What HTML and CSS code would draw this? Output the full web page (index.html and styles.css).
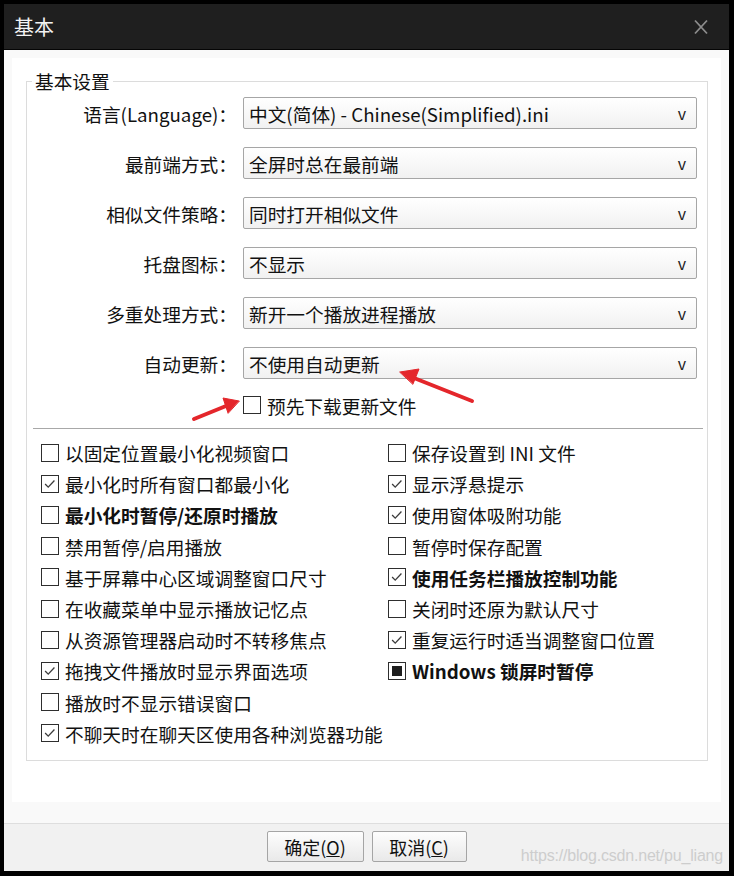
FILE: index.html
```html
<!DOCTYPE html>
<html lang="zh-cn">

<head>
    <meta charset="UTF-8">
    <meta name="viewport" content="width=device-width, initial-scale=1.0">
    <title>基本</title>
    <link rel="stylesheet" href="styles.css">
</head>

<body>
    <div class="window">
        <!-- 标题栏 -->
        <div class="titlebar">
            <span class="title">基本</span>
            <svg class="close" width="16" height="16" viewBox="0 0 16 16">
                <path d="M2 1.5 L14 14.5 M14 1.5 L2 14.5" stroke="#8c8c8c" stroke-width="1.8" fill="none" />
            </svg>
        </div>

        <div class="body">
            <div class="panel">
                <fieldset class="group">
                    <legend>基本设置</legend>

                    <div class="form">
                        <div class="form-row">
                            <label>语言(Language)：</label>
                            <div class="select"><span>中文(简体) - Chinese(Simplified).ini</span><span class="arrow">v</span></div>
                        </div>
                        <div class="form-row">
                            <label>最前端方式：</label>
                            <div class="select"><span>全屏时总在最前端</span><span class="arrow">v</span></div>
                        </div>
                        <div class="form-row">
                            <label>相似文件策略：</label>
                            <div class="select"><span>同时打开相似文件</span><span class="arrow">v</span></div>
                        </div>
                        <div class="form-row">
                            <label>托盘图标：</label>
                            <div class="select"><span>不显示</span><span class="arrow">v</span></div>
                        </div>
                        <div class="form-row">
                            <label>多重处理方式：</label>
                            <div class="select"><span>新开一个播放进程播放</span><span class="arrow">v</span></div>
                        </div>
                        <div class="form-row">
                            <label>自动更新：</label>
                            <div class="select"><span>不使用自动更新</span><span class="arrow">v</span></div>
                        </div>
                    </div>

                    <div class="pre-row"><span class="cb"></span>预先下载更新文件</div>

                    <div class="sep"></div>

                    <div class="opts">
                        <div class="col col-left">
                            <div class="opt"><span class="cb"></span>以固定位置最小化视频窗口</div>
                            <div class="opt"><span class="cb checked"><svg viewBox="0 0 18 18"><polyline points="3.5,9 7,12.5 14,5" /></svg></span>最小化时所有窗口都最小化</div>
                            <div class="opt bold"><span class="cb"></span>最小化时暂停/还原时播放</div>
                            <div class="opt"><span class="cb"></span>禁用暂停/启用播放</div>
                            <div class="opt"><span class="cb"></span>基于屏幕中心区域调整窗口尺寸</div>
                            <div class="opt"><span class="cb"></span>在收藏菜单中显示播放记忆点</div>
                            <div class="opt"><span class="cb"></span>从资源管理器启动时不转移焦点</div>
                            <div class="opt"><span class="cb checked"><svg viewBox="0 0 18 18"><polyline points="3.5,9 7,12.5 14,5" /></svg></span>拖拽文件播放时显示界面选项</div>
                            <div class="opt"><span class="cb"></span>播放时不显示错误窗口</div>
                            <div class="opt"><span class="cb checked"><svg viewBox="0 0 18 18"><polyline points="3.5,9 7,12.5 14,5" /></svg></span>不聊天时在聊天区使用各种浏览器功能</div>
                        </div>
                        <div class="col col-right">
                            <div class="opt"><span class="cb"></span>保存设置到 INI 文件</div>
                            <div class="opt"><span class="cb checked"><svg viewBox="0 0 18 18"><polyline points="3.5,9 7,12.5 14,5" /></svg></span>显示浮悬提示</div>
                            <div class="opt"><span class="cb checked"><svg viewBox="0 0 18 18"><polyline points="3.5,9 7,12.5 14,5" /></svg></span>使用窗体吸附功能</div>
                            <div class="opt"><span class="cb"></span>暂停时保存配置</div>
                            <div class="opt bold"><span class="cb checked"><svg viewBox="0 0 18 18"><polyline points="3.5,9 7,12.5 14,5" /></svg></span>使用任务栏播放控制功能</div>
                            <div class="opt"><span class="cb"></span>关闭时还原为默认尺寸</div>
                            <div class="opt"><span class="cb checked"><svg viewBox="0 0 18 18"><polyline points="3.5,9 7,12.5 14,5" /></svg></span>重复运行时适当调整窗口位置</div>
                            <div class="opt bold"><span class="cb mixed"><i></i></span>Windows 锁屏时暂停</div>
                        </div>
                    </div>
                </fieldset>
            </div>

            <!-- 底部按钮 -->
            <div class="footer">
                <a href="javascript:;" class="btn btn-ok">确定(<u>O</u>)</a>
                <a href="javascript:;" class="btn btn-cancel">取消(<u>C</u>)</a>
            </div>
            <div class="watermark">https://blog.csdn.net/pu_liang</div>
        </div>
    </div>

    <!-- 红色箭头标注 -->
    <svg class="marks" width="734" height="876" viewBox="0 0 734 876">
        <g fill="#e4262b" stroke="#e4262b" stroke-linecap="round">
            <line x1="472" y1="401" x2="414" y2="378" stroke-width="4" />
            <polygon points="400,372 419,369 413,384" stroke-width="1" />
            <line x1="194" y1="419" x2="226" y2="406" stroke-width="4" />
            <polygon points="239,401 223,398 228,413" stroke-width="1" />
        </g>
    </svg>
</body>

</html>
```

FILE: styles.css
```css
/* 初始化样式 */

body {
    margin: 0;
    background: #000;
    font-family: "Noto Sans CJK SC", "Noto Sans", sans-serif;
    color: #111;
}

a {
    text-decoration: none;
    color: #111;
}

/* 窗口 */

.window {
    position: relative;
    width: 725px;
    height: 867px;
    margin: 4px 0 0 4px;
    display: flex;
    flex-direction: column;
}

.titlebar {
    height: 45px;
    border-bottom: 1px solid #050505;
    background: #1f1f1f;
    display: flex;
    align-items: center;
    justify-content: space-between;
    padding: 0 20px 0 10px;
}

.title {
    color: #f2f2f2;
    font-size: 20px;
}

.close {
    display: block;
}

.body {
    position: relative;
    flex: 1;
    background: #f9f9f9;
    display: flex;
    flex-direction: column;
}

.panel {
    height: 744px;
    margin: 8px 8px 0 8px;
    background: #fff;
    padding-top: 11px;
    box-sizing: border-box;
}

/* 分组框 */

.group {
    margin: 0 13px 0 14px;
    padding: 0;
    border: 1px solid #dcdcdc;
    height: 692px;
    box-sizing: border-box;
    min-width: 0;
}

.group legend {
    margin-left: 5px;
    padding: 0 3px;
    font-size: 18.7px;
    line-height: 24px;
}

.form {
    display: flex;
    flex-direction: column;
    gap: 18px;
    padding-top: 4px;
}

.form-row {
    display: flex;
    align-items: center;
    height: 32px;
}

.form-row label {
    width: 210px;
    text-align: right;
    font-size: 18.7px;
    white-space: nowrap;
}

.select {
    width: 454px;
    height: 32px;
    margin-left: 6px;
    box-sizing: border-box;
    border: 1px solid #a6a6a6;
    border-radius: 2px;
    background: linear-gradient(#ffffff, #f1f1f1);
    display: flex;
    align-items: center;
    justify-content: space-between;
    padding: 0 10px 0 5px;
    font-size: 18.7px;
    white-space: nowrap;
}

.select .arrow {
    font-size: 16px;
    color: #222;
}

.pre-row {
    display: flex;
    align-items: center;
    height: 24px;
    margin-top: 14px;
    padding-left: 216px;
    font-size: 18.7px;
}

.sep {
    height: 1px;
    background: #a8a8a8;
    margin: 11px 4px 0 6px;
}

/* 复选框 */

.cb {
    width: 18px;
    height: 18px;
    box-sizing: border-box;
    border: 1px solid #2e2e2e;
    background: #fff;
    margin-right: 6px;
    flex-shrink: 0;
    display: flex;
    align-items: center;
    justify-content: center;
}

.cb svg {
    width: 18px;
    height: 18px;
    display: block;
}

.cb polyline {
    fill: none;
    stroke: #3c3c3c;
    stroke-width: 1.5;
}

.cb.mixed i {
    display: block;
    width: 10px;
    height: 10px;
    background: #1e1e1e;
}

.opts {
    display: flex;
    margin-top: 8px;
}

.col-left {
    width: 361px;
    padding-left: 14px;
    box-sizing: border-box;
}

.opt {
    display: flex;
    align-items: center;
    height: 31.2px;
    font-size: 18.7px;
    white-space: nowrap;
}

.opt.bold {
    font-weight: bold;
}

/* 底部按钮 */

.footer {
    margin-top: 21px;
    border-top: 1px solid #dedede;
    background: #f1f1f1;
    flex: 1;
    display: flex;
    justify-content: center;
    align-items: flex-start;
    gap: 8px;
    padding-top: 7px;
}

.btn {
    display: flex;
    align-items: center;
    justify-content: center;
    height: 31px;
    box-sizing: border-box;
    border: 1px solid #a5a5a5;
    border-radius: 2px;
    background: linear-gradient(#fdfdfd, #e9e9e9);
    font-size: 18px;
}

.btn-ok {
    width: 97px;
}

.btn-cancel {
    width: 95px;
}

.watermark {
    position: absolute;
    right: 6px;
    bottom: 6px;
    font-family: "Liberation Sans", sans-serif;
    font-size: 16px;
    letter-spacing: -0.2px;
    color: #cdcdcd;
}

.marks {
    position: absolute;
    top: 0;
    left: 0;
    pointer-events: none;
}
```
